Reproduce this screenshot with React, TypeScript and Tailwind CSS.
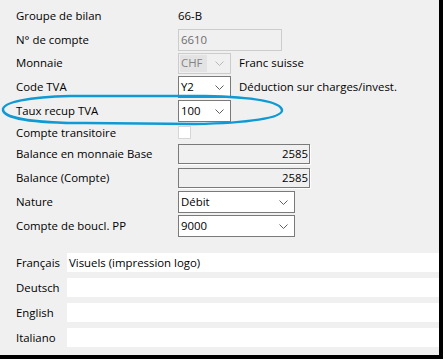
import type { ReactNode } from "react"

const Chevron = ({ muted }: { muted?: boolean }) => (
  <svg width="9" height="5" viewBox="0 0 9 5" className="shrink-0">
    <polyline
      points="0.5,0.5 4.5,4.5 8.5,0.5"
      fill="none"
      stroke={muted ? "#b8b8b8" : "#5f5f5f"}
      strokeWidth="1"
    />
  </svg>
)

const Row = ({ label, h, children }: { label: string; h: string; children?: ReactNode }) => (
  <div className={`flex items-center ${h}`}>
    <div className="w-[162px] shrink-0">{label}</div>
    {children}
  </div>
)

const Select = ({ value, w }: { value: string; w: string }) => (
  <div className={`flex items-center justify-between h-[22px] ${w} bg-white border border-[#7a7a7a] pl-[2px] pr-[6px]`}>
    <span>{value}</span>
    <Chevron />
  </div>
)

const LangRow = ({ label, value }: { label: string; value?: string }) => (
  <div className="flex items-center h-[19px]">
    <div className="w-[51px] shrink-0">{label}</div>
    <div className="flex-1 h-full bg-white pl-[2px] leading-[19px]">{value}</div>
  </div>
)

const App = () => {
  return (
    <div className="w-[445px] h-[362px] bg-white">
      <div className="relative w-[443px] h-[359px] bg-[#f0f0f0] border-r-4 border-b-4 border-black text-[11.4px] text-black font-['Open_Sans',sans-serif] leading-none">
        <div className="pl-4 pt-[4px]">
          <Row label="Groupe de bilan" h="h-[24px]">
            <span>66-B</span>
          </Row>
          <Row label="N° de compte" h="h-[23px]">
            <div className="flex items-center h-[22px] w-[104px] border border-[#cccccc] pl-[2px] text-[#6d6d6d]">
              6610
            </div>
          </Row>
          <Row label="Monnaie" h="h-[24px]">
            <div className="flex items-center justify-between h-[21px] w-[53px] border border-[#cccccc] p-[1px] pr-[6px]">
              <span className="flex items-center h-full pl-[1px] pr-[5px] bg-[#e3e3e3] text-[#838383]">CHF</span>
              <Chevron muted />
            </div>
            <span className="ml-2">Franc suisse</span>
          </Row>
          <Row label="Code TVA" h="h-[24px]">
            <Select value="Y2" w="w-[53px]" />
            <span className="ml-2">Déduction sur charges/invest.</span>
          </Row>
          <Row label="Taux recup TVA" h="h-[24px]">
            <Select value="100" w="w-[53px]" />
          </Row>
          <Row label="Compte transitoire" h="h-[19px]">
            <div className="w-[13px] h-[13px] bg-white border border-[#d6d6d6]" />
          </Row>
          <Row label="Balance en monnaie Base" h="h-[24px]">
            <div className="flex items-center justify-end h-[20px] w-[132px] border border-[#7a7a7a] pr-[1px] shadow-[1px_1px_0_#ffffff]">
              2585
            </div>
          </Row>
          <Row label="Balance (Compte)" h="h-[24px]">
            <div className="flex items-center justify-end h-[20px] w-[132px] border border-[#7a7a7a] pr-[1px] shadow-[1px_1px_0_#ffffff]">
              2585
            </div>
          </Row>
          <Row label="Nature" h="h-[24px]">
            <Select value="Débit" w="w-[117px]" />
          </Row>
          <Row label="Compte de boucl. PP" h="h-[24px]">
            <Select value="9000" w="w-[117px]" />
          </Row>
          <div className="mt-[15px] flex flex-col gap-[6px]">
            <LangRow label="Français" value="Visuels (impression logo)" />
            <LangRow label="Deutsch" />
            <LangRow label="English" />
            <LangRow label="Italiano" />
          </div>
        </div>

        {/* hand-drawn highlight around the VAT recovery row */}
        <svg className="absolute left-0 top-0 pointer-events-none" width="439" height="140" viewBox="0 0 439 140">
          <path
            d="M 282 110 C 280 101, 252 97, 205 96 L 70 96 C 30 97, 2 102, 3 110 C 4 119, 40 123, 85 123 L 195 124 C 248 123, 283 118, 282 110"
            fill="none"
            stroke="#0f9ad6"
            strokeWidth="2.5"
            strokeLinecap="round"
          />
        </svg>
      </div>
    </div>
  )
}

export default App
